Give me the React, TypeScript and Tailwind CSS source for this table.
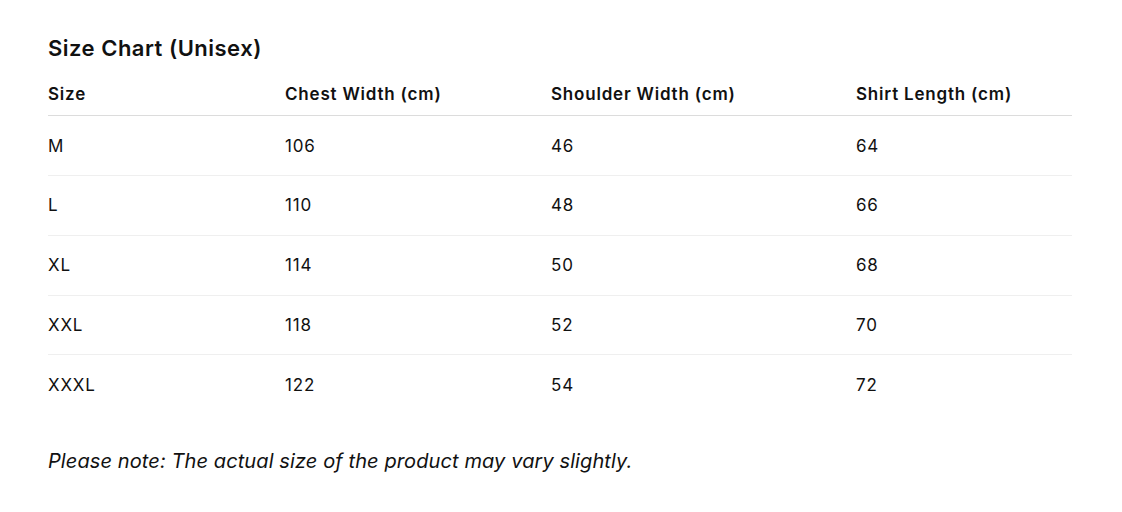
export default function App() {
  const rows = [
    ["M", "106", "46", "64"],
    ["L", "110", "48", "66"],
    ["XL", "114", "50", "68"],
    ["XXL", "118", "52", "70"],
    ["XXXL", "122", "54", "72"],
  ];
  return (
    <div className="bg-white min-h-[512px] px-[48px] pt-[34px] text-[#111111]" style={{ fontFamily: "Inter, 'Liberation Sans', sans-serif" }}>
      <h2 className="text-[22px] leading-[28px] font-semibold tracking-[0.5px]">Size Chart (Unisex)</h2>
      <table className="w-[1024px] table-fixed border-collapse mt-[7px] text-[17px] leading-[24px] tracking-[0.8px]">
        <colgroup>
          <col className="w-[237px]" />
          <col className="w-[266px]" />
          <col className="w-[305px]" />
          <col className="w-[216px]" />
        </colgroup>
        <thead>
          <tr className="border-b border-[#dcdcdc]">
            {["Size", "Chest Width (cm)", "Shoulder Width (cm)", "Shirt Length (cm)"].map((h) => (
              <th key={h} className="text-left font-semibold pt-[13px] pb-[9px] p-0">{h}</th>
            ))}
          </tr>
        </thead>
        <tbody>
          {rows.map((r, i) => (
            <tr key={i} className={i < rows.length - 1 ? "border-b border-[#efefef]" : ""}>
              {r.map((c, j) => (
                <td key={j} className="pt-[17.5px] pb-[17.35px] p-0">{c}</td>
              ))}
            </tr>
          ))}
        </tbody>
      </table>
      <p className="mt-[33px] text-[20px] leading-[28px] italic tracking-[0.1px]">Please note: The actual size of the product may vary slightly.</p>
    </div>
  );
}
